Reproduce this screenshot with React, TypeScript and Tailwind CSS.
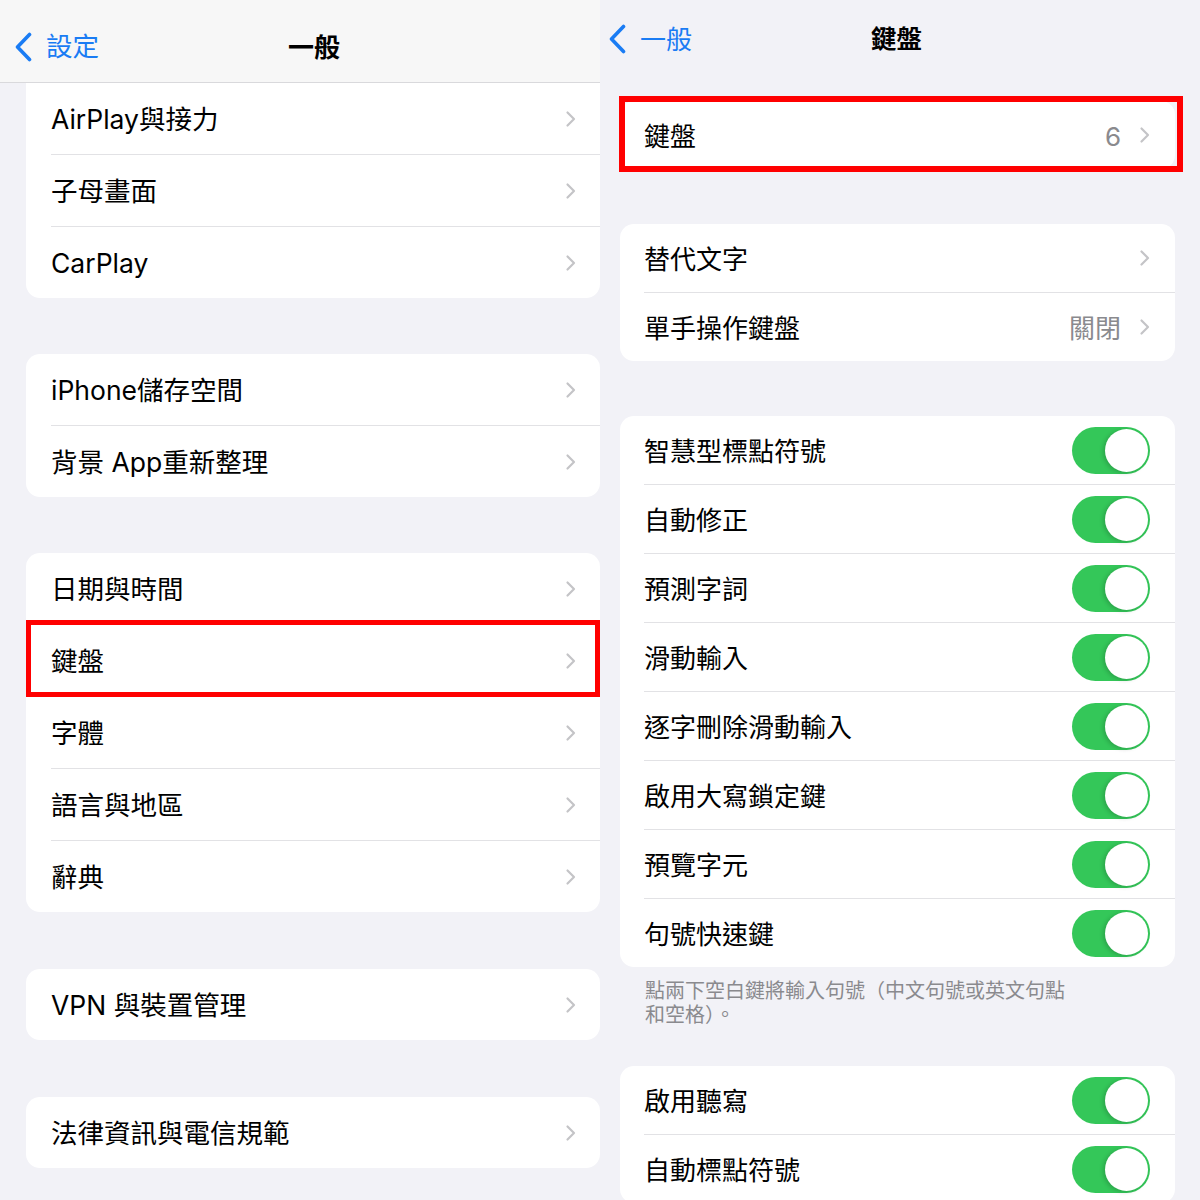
import { Fragment } from "react";

const font = "font-['Inter','Noto_Sans_CJK_TC',sans-serif]";

function Chevron() {
  return (
    <svg width="11" height="18" viewBox="0 0 11 18" className="shrink-0">
      <polyline
        points="2.5,2.5 9,9 2.5,15.5"
        fill="none"
        stroke="#c4c4c7"
        strokeWidth="2.2"
        strokeLinecap="round"
        strokeLinejoin="round"
      />
    </svg>
  );
}

function BackChevron() {
  return (
    <svg width="19" height="30" viewBox="0 0 19 30" className="shrink-0">
      <polyline
        points="15.5,2.5 3.5,15 15.5,27.5"
        fill="none"
        stroke="#1a7cf4"
        strokeWidth="3.6"
        strokeLinecap="round"
        strokeLinejoin="round"
      />
    </svg>
  );
}

function Toggle() {
  return (
    <div className="w-[78px] h-[47px] rounded-full bg-[#34c759] flex items-center justify-end p-[2px]">
      <div className="w-[43px] h-[43px] rounded-full bg-white shadow-[-2px_1px_4px_rgba(0,0,0,0.18)]" />
    </div>
  );
}

type LeftRow = { label: string; marked?: boolean };

function LeftCard({ rows, top }: { rows: LeftRow[]; top?: boolean }) {
  return (
    <div
      className={
        "bg-white ml-[26px] w-[574px] " +
        (top ? "rounded-b-[14px]" : "rounded-[14px]")
      }
    >
      {rows.map((r, i) => (
        <Fragment key={r.label}>
          {i > 0 && <div className="ml-[25px] h-px bg-[#e2e2e5]" />}
          <div className="relative h-[71px] flex items-center pl-[25px] pr-[24px]">
            <span className="flex-1 pt-[2px] text-[26.5px] text-black">{r.label}</span>
            <Chevron />
            {r.marked && (
              <span className="absolute left-0 right-0 top-[-5px] bottom-[-1px] border-[5px] border-[#ff0000]" />
            )}
          </div>
        </Fragment>
      ))}
    </div>
  );
}

type RightRow = { label: string; value?: string; toggle?: boolean };

function RightCard({ rows }: { rows: RightRow[] }) {
  return (
    <div className="bg-white ml-[20px] w-[555px] rounded-[14px]">
      {rows.map((r, i) => (
        <Fragment key={r.label}>
          {i > 0 && <div className="ml-[24px] h-px bg-[#e2e2e5]" />}
          <div className="h-[68px] flex items-center pl-[24px] pr-[25px]">
            <span className="flex-1 pt-[2px] text-[26px] text-black">{r.label}</span>
            {r.toggle ? (
              <Toggle />
            ) : (
              <div className="flex items-center gap-[18px]">
                {r.value && (
                  <span className="pt-[2px] text-[26px] text-[#8a8a8e]">{r.value}</span>
                )}
                <Chevron />
              </div>
            )}
          </div>
        </Fragment>
      ))}
    </div>
  );
}

function LeftPanel() {
  return (
    <div className="w-[600px] h-[1200px] overflow-hidden bg-[#f2f2f7]">
      <div className="h-[83px] bg-[#f7f7f7] border-b border-[#d9d9dc] flex items-center pt-[12px]">
        <div className="w-[288px] flex items-center pl-[14px] gap-[13px]">
          <BackChevron />
          <span className="text-[26.5px] text-[#1a7cf4]">設定</span>
        </div>
        <span className="text-[26px] font-bold text-black">一般</span>
      </div>
      <LeftCard top rows={[{ label: "AirPlay與接力" }, { label: "子母畫面" }, { label: "CarPlay" }]} />
      <div className="h-[56px]" />
      <LeftCard rows={[{ label: "iPhone儲存空間" }, { label: "背景 App重新整理" }]} />
      <div className="h-[56px]" />
      <LeftCard
        rows={[
          { label: "日期與時間" },
          { label: "鍵盤", marked: true },
          { label: "字體" },
          { label: "語言與地區" },
          { label: "辭典" },
        ]}
      />
      <div className="h-[57px]" />
      <LeftCard rows={[{ label: "VPN 與裝置管理" }]} />
      <div className="h-[57px]" />
      <LeftCard rows={[{ label: "法律資訊與電信規範" }]} />
    </div>
  );
}

function RightPanel() {
  return (
    <div className="w-[600px] h-[1200px] overflow-hidden bg-[#f2f2f7]">
      <div className="h-[80px] flex items-center pb-[2px]">
        <div className="w-[271px] flex items-center pl-[8px] gap-[13px]">
          <BackChevron />
          <span className="text-[26px] text-[#1a7cf4]">一般</span>
        </div>
        <span className="text-[25.5px] font-bold text-black">鍵盤</span>
      </div>
      <div className="h-[21px]" />
      <div className="relative">
        <RightCard rows={[{ label: "鍵盤", value: "6" }]} />
        <span className="absolute left-[19px] w-[564px] top-[-5px] bottom-[-3px] border-[6px] border-[#ff0000]" />
      </div>
      <div className="h-[55px]" />
      <RightCard rows={[{ label: "替代文字" }, { label: "單手操作鍵盤", value: "關閉" }]} />
      <div className="h-[55px]" />
      <RightCard
        rows={[
          { label: "智慧型標點符號", toggle: true },
          { label: "自動修正", toggle: true },
          { label: "預測字詞", toggle: true },
          { label: "滑動輸入", toggle: true },
          { label: "逐字刪除滑動輸入", toggle: true },
          { label: "啟用大寫鎖定鍵", toggle: true },
          { label: "預覽字元", toggle: true },
          { label: "句號快速鍵", toggle: true },
        ]}
      />
      <p className="ml-[45px] w-[430px] pt-[12px] text-[20px] leading-[24px] text-[#8a8a8e]">
        點兩下空白鍵將輸入句號（中文句號或英文句點和空格）。
      </p>
      <div className="h-[39px]" />
      <RightCard
        rows={[
          { label: "啟用聽寫", toggle: true },
          { label: "自動標點符號", toggle: true },
        ]}
      />
    </div>
  );
}

export default function App() {
  return (
    <main className={"flex w-[1200px] h-[1200px] overflow-hidden " + font}>
      <LeftPanel />
      <RightPanel />
    </main>
  );
}
